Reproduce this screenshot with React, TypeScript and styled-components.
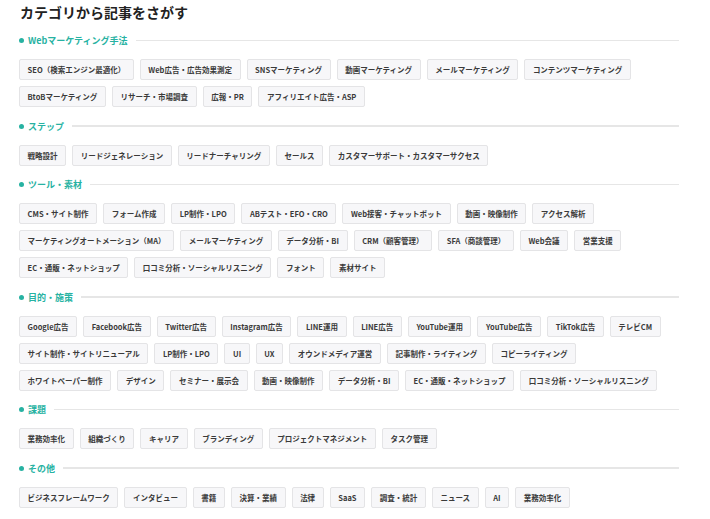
import React from "react";
import styled, { createGlobalStyle } from "styled-components";

const Global = createGlobalStyle`
  html, body { margin: 0; padding: 0; background: #ffffff; }
  body { font-family: "Noto Sans CJK JP", "Noto Sans", sans-serif; color: #333; }
`;

const Page = styled.div`
  width: 660px;
  padding: 2px 0 0 19px;
`;

const Title = styled.h2`
  margin: 0 0 11px 1px;
  font-size: 14px;
  line-height: 20px;
  font-weight: 700;
  color: #222;
`;

const Section = styled.section`
  margin-bottom: 11.5px;
`;

const Heading = styled.div`
  display: flex;
  align-items: center;
  height: 15px;
  margin-bottom: 11px;
  font-size: 9px;
  font-weight: 700;
  color: #27b2a2;
  &::before {
    content: "";
    width: 5px;
    height: 5px;
    border-radius: 50%;
    background: #27b2a2;
    margin: 0 4px 0 0;
    flex: none;
  }
  &::after {
    content: "";
    flex: 1;
    height: 1.5px;
    background: #e6e6e6;
    margin-left: 8px;
  }
`;

const TagList = styled.div`
  display: flex;
  flex-wrap: wrap;
  gap: 6px 6px;
  width: 650px;
`;

const Tag = styled.a`
  display: inline-flex;
  align-items: center;
  box-sizing: border-box;
  height: 21px;
  padding: 0 7.6px;
  font-size: 7.5px;
  font-weight: 700;
  color: #3a3a3a;
  background: #f7f7f9;
  border: 1px solid #e4e4e6;
  border-radius: 2px;
  white-space: nowrap;
  text-decoration: none;
`;

const sections: { title: string; tags: string[] }[] = [
  {
    title: "Webマーケティング手法",
    tags: [
      "SEO（検索エンジン最適化）",
      "Web広告・広告効果測定",
      "SNSマーケティング",
      "動画マーケティング",
      "メールマーケティング",
      "コンテンツマーケティング",
      "BtoBマーケティング",
      "リサーチ・市場調査",
      "広報・PR",
      "アフィリエイト広告・ASP",
    ],
  },
  {
    title: "ステップ",
    tags: [
      "戦略設計",
      "リードジェネレーション",
      "リードナーチャリング",
      "セールス",
      "カスタマーサポート・カスタマーサクセス",
    ],
  },
  {
    title: "ツール・素材",
    tags: [
      "CMS・サイト制作",
      "フォーム作成",
      "LP制作・LPO",
      "ABテスト・EFO・CRO",
      "Web接客・チャットボット",
      "動画・映像制作",
      "アクセス解析",
      "マーケティングオートメーション（MA）",
      "メールマーケティング",
      "データ分析・BI",
      "CRM（顧客管理）",
      "SFA（商談管理）",
      "Web会議",
      "営業支援",
      "EC・通販・ネットショップ",
      "口コミ分析・ソーシャルリスニング",
      "フォント",
      "素材サイト",
    ],
  },
  {
    title: "目的・施策",
    tags: [
      "Google広告",
      "Facebook広告",
      "Twitter広告",
      "Instagram広告",
      "LINE運用",
      "LINE広告",
      "YouTube運用",
      "YouTube広告",
      "TikTok広告",
      "テレビCM",
      "サイト制作・サイトリニューアル",
      "LP制作・LPO",
      "UI",
      "UX",
      "オウンドメディア運営",
      "記事制作・ライティング",
      "コピーライティング",
      "ホワイトペーパー制作",
      "デザイン",
      "セミナー・展示会",
      "動画・映像制作",
      "データ分析・BI",
      "EC・通販・ネットショップ",
      "口コミ分析・ソーシャルリスニング",
    ],
  },
  {
    title: "課題",
    tags: [
      "業務効率化",
      "組織づくり",
      "キャリア",
      "ブランディング",
      "プロジェクトマネジメント",
      "タスク管理",
    ],
  },
  {
    title: "その他",
    tags: [
      "ビジネスフレームワーク",
      "インタビュー",
      "書籍",
      "決算・業績",
      "法律",
      "SaaS",
      "調査・統計",
      "ニュース",
      "AI",
      "業務効率化",
    ],
  },
];

export default function App() {
  return (
    <>
      <Global />
      <Page>
        <Title>カテゴリから記事をさがす</Title>
        {sections.map((s) => (
          <Section key={s.title}>
            <Heading>{s.title}</Heading>
            <TagList>
              {s.tags.map((t, i) => (
                <Tag key={t + i} href="#">
                  {t}
                </Tag>
              ))}
            </TagList>
          </Section>
        ))}
      </Page>
    </>
  );
}
